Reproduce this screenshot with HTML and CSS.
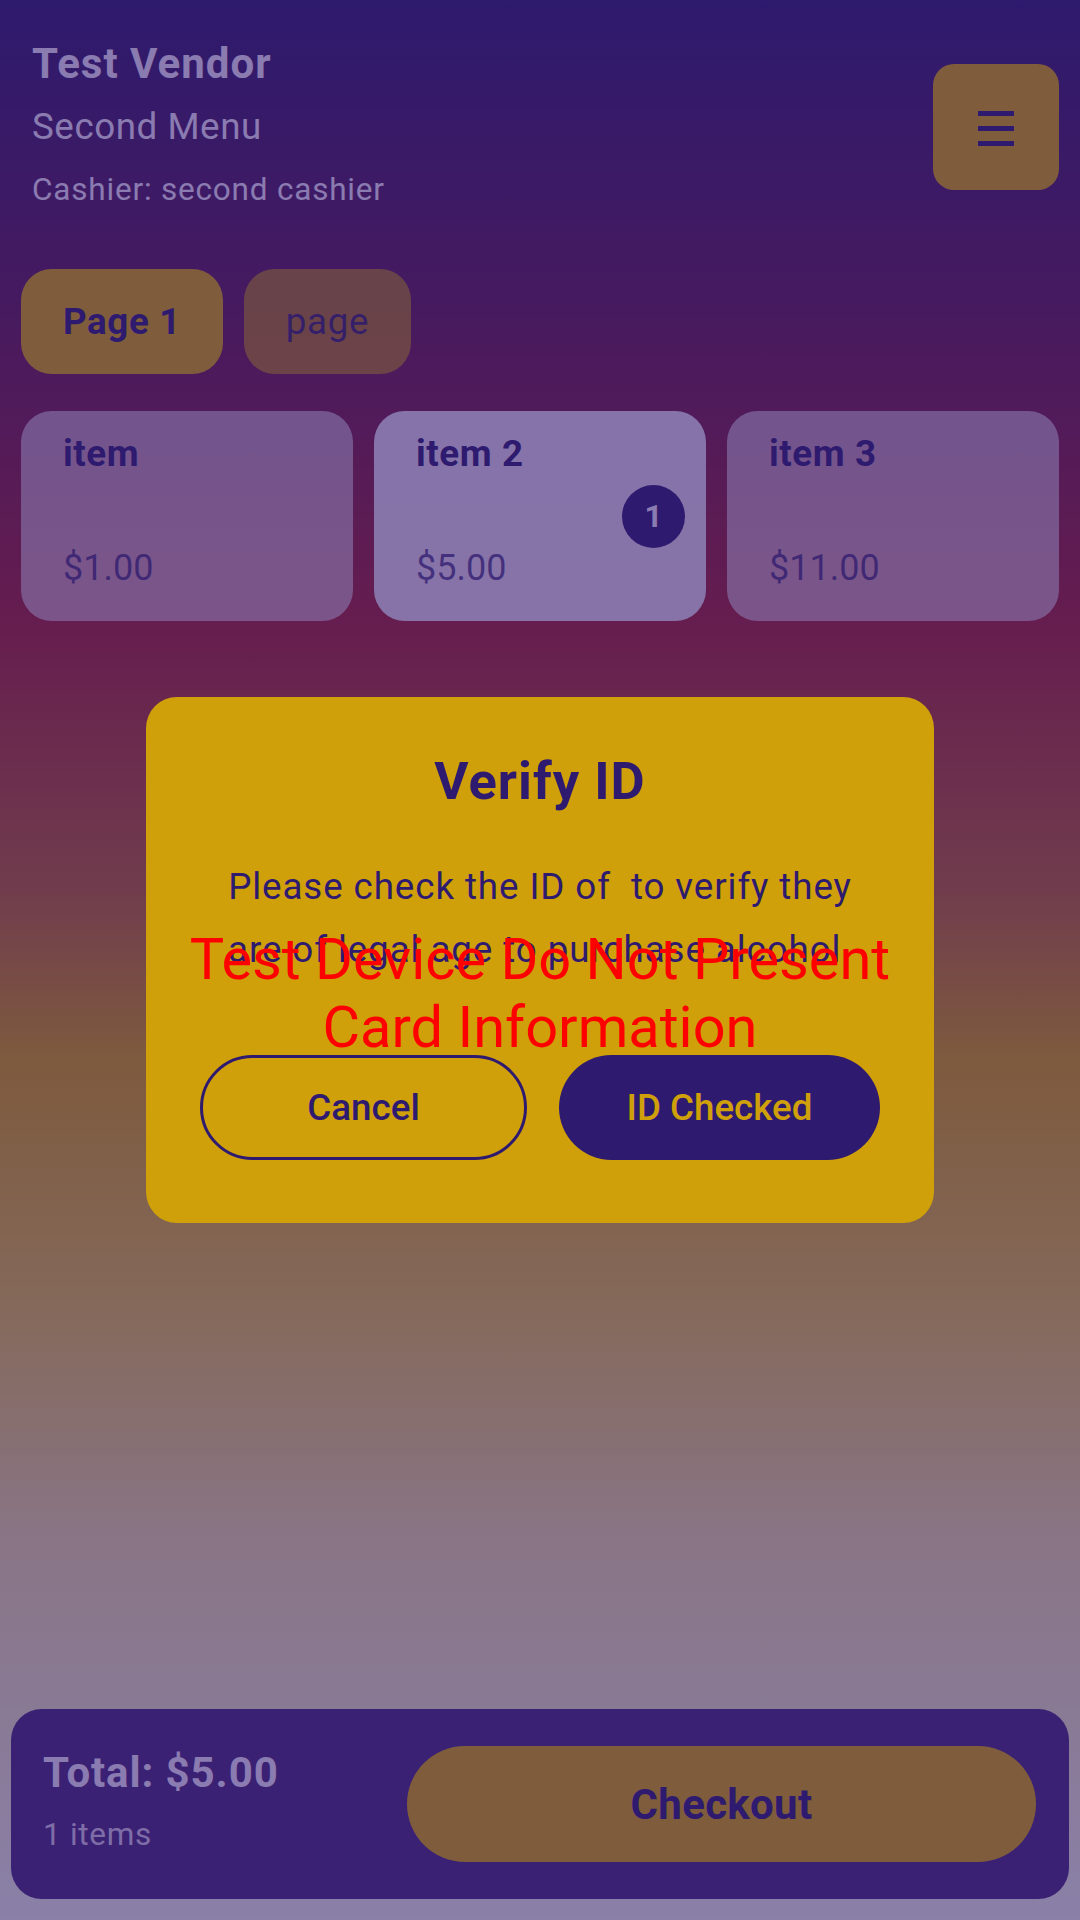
FILE: index.html
```html
<!DOCTYPE html>
<html lang="en">
<head>
<meta charset="utf-8">
<title>Test Vendor - Second Menu</title>
<link rel="stylesheet" href="styles.css">
</head>
<body>
<div class="app">
  <div class="content">
    <header class="header">
      <div class="vendor">
        <div class="vendor-name">Test Vendor</div>
        <div class="menu-name">Second Menu</div>
        <div class="cashier">Cashier: second cashier</div>
      </div>
      <button class="menu-btn" aria-label="Menu">
        <svg class="menu-icon" width="36" height="35" viewBox="0 0 36 35"><rect x="0" y="0" width="36" height="5"/><rect x="0" y="15" width="36" height="5"/><rect x="0" y="30" width="36" height="5"/></svg>
      </button>
    </header>
    <nav class="tabs">
      <button class="tab tab-active">Page 1</button>
      <button class="tab">page</button>
    </nav>
    <div class="grid">
      <div class="card">
        <div class="card-name">item</div>
        <div class="card-price">$1.00</div>
      </div>
      <div class="card card-selected">
        <div class="card-name">item 2</div>
        <div class="card-price">$5.00</div>
        <span class="badge">1</span>
      </div>
      <div class="card">
        <div class="card-name">item 3</div>
        <div class="card-price">$11.00</div>
      </div>
    </div>
  </div>
  <footer class="bar">
    <div class="totals">
      <div class="total">Total: $5.00</div>
      <div class="count">1 items</div>
    </div>
    <button class="checkout">Checkout</button>
  </footer>
</div>
<div class="scrim">
  <div class="dialog">
    <h2 class="dialog-title">Verify ID</h2>
    <p class="dialog-text">Please check the ID of  to verify they are of legal age to purchase alcohol.</p>
    <div class="actions">
      <button class="btn btn-outline">Cancel</button>
      <button class="btn btn-solid">ID Checked</button>
    </div>
  </div>
</div>
<div class="watermark">Test Device Do Not Present<br>Card Information</div>
</body>
</html>
```
FILE: styles.css
```css
html, body {
  margin: 0;
  padding: 0;
}

body {
  width: 1080px;
  min-height: 1920px;
  font-family: Roboto, "Noto Sans", sans-serif;
  background: linear-gradient(180deg,
    #2e1a6e 0%,
    #5e1a52 15.6%,
    #9e2030 32.3%,
    #b4602c 46.5%,
    #ce9a0e 55%,
    #dcb846 68%,
    #e4d09c 80%,
    #e6e6e2 100%);
  overflow: hidden;
}

button {
  font-family: inherit;
  cursor: pointer;
}

.app {
  height: 1920px;
  display: flex;
  flex-direction: column;
}

.content {
  flex: 1;
  padding: 21px;
}

/* Header */
.header {
  display: flex;
  justify-content: space-between;
  align-items: flex-start;
  padding: 18px 0 0 11px;
  color: #e6dcf2;
}

.vendor-name {
  font-size: 42px;
  font-weight: 700;
  line-height: 49px;
  letter-spacing: 1px;
}

.menu-name {
  font-size: 36.75px;
  line-height: 43px;
  margin-top: 17px;
  letter-spacing: 0.55px;
}

.cashier {
  font-size: 31.5px;
  line-height: 37px;
  margin-top: 23px;
  letter-spacing: 0.8px;
}

.menu-btn {
  width: 126px;
  height: 126px;
  margin-top: 25px;
  border: 0;
  border-radius: 21px;
  background: #d0a00b;
  display: flex;
  align-items: center;
  justify-content: center;
  padding: 0;
}

.menu-icon {
  fill: #2e1a6e;
  margin-top: 3px;
}

/* Tabs */
.tabs {
  display: flex;
  gap: 21px;
  margin-top: 61px;
}

.tab {
  height: 105px;
  padding: 0 42px;
  border: 0;
  border-radius: 31px;
  font-size: 36.75px;
  font-weight: 400;
  letter-spacing: 0.6px;
  background: rgba(208, 160, 11, 0.62);
  color: rgba(46, 26, 110, 0.88);
}

.tab-active {
  background: #d0a00b;
  color: #2e1a6e;
  font-weight: 700;
}

/* Item grid */
.grid {
  display: grid;
  grid-template-columns: repeat(3, 1fr);
  gap: 21px;
  margin-top: 37px;
}

.card {
  position: relative;
  height: 210px;
  box-sizing: border-box;
  padding: 21px 42px 31px;
  border-radius: 31px;
  background: rgba(230, 220, 242, 0.6);
  display: flex;
  flex-direction: column;
  justify-content: space-between;
}

.card-selected {
  background: rgba(230, 220, 242, 0.92);
}

.card-name {
  font-size: 36.75px;
  line-height: 43px;
  font-weight: 700;
  letter-spacing: 0.6px;
  color: #2e1a6e;
}

.card-price {
  font-size: 36px;
  line-height: 43px;
  color: rgba(46, 26, 110, 0.75);
}

.badge {
  position: absolute;
  right: 21px;
  top: 74px;
  width: 63px;
  height: 63px;
  border-radius: 50%;
  background: #2e1a6e;
  color: #e6dcf2;
  font-size: 31.5px;
  font-weight: 700;
  display: flex;
  align-items: center;
  justify-content: center;
}

/* Checkout bar */
.bar {
  margin: 0 11px 21px;
  height: 190px;
  box-sizing: border-box;
  padding: 37px 33px 37px 32px;
  border-radius: 31px;
  background: #46287a;
  display: flex;
  align-items: center;
  justify-content: space-between;
  color: #e6dcf2;
}

.totals {
  margin-bottom: 8px;
}

.total {
  font-size: 42px;
  font-weight: 700;
  line-height: 49px;
  letter-spacing: 0.9px;
}

.count {
  font-size: 31.5px;
  line-height: 37px;
  margin-top: 19px;
  letter-spacing: 0.7px;
  opacity: 0.85;
}

.checkout {
  flex: 0 0 629px;
  height: 116px;
  border: 0;
  border-radius: 58px;
  background: #d0a00b;
  color: #2e1a6e;
  font-size: 42px;
  font-weight: 700;
  letter-spacing: 0.3px;
}

/* Modal */
.scrim {
  position: fixed;
  inset: 0;
  background: rgba(46, 26, 110, 0.5);
  display: flex;
  align-items: center;
  justify-content: center;
}

.dialog {
  width: 788px;
  box-sizing: border-box;
  padding: 54px 54px 63px;
  background: #d0a00b;
  border-radius: 31px;
  text-align: center;
  color: #2e1a6e;
}

.dialog-title {
  margin: 0;
  font-size: 52.5px;
  line-height: 61.5px;
  font-weight: 700;
  letter-spacing: 1px;
}

.dialog-text {
  margin: 42px 0 0;
  padding: 0 8px;
  font-size: 36.75px;
  line-height: 63px;
  letter-spacing: 0.9px;
  white-space: pre-wrap;
}

.actions {
  display: flex;
  gap: 32px;
  margin-top: 74px;
}

.btn {
  flex: 1 1 0;
  height: 105px;
  border-radius: 53px;
  font-size: 36.75px;
  font-weight: 500;
}

.btn-outline {
  background: transparent;
  border: 3px solid #2e1a6e;
  color: #2e1a6e;
}

.btn-solid {
  background: #2e1a6e;
  border: 0;
  color: #d0a00b;
}

/* Test-device watermark */
.watermark {
  position: fixed;
  top: 926px;
  left: 0;
  right: 0;
  text-align: center;
  color: #ff0000;
  font-size: 57.75px;
  line-height: 67.7px;
  pointer-events: none;
}
```
